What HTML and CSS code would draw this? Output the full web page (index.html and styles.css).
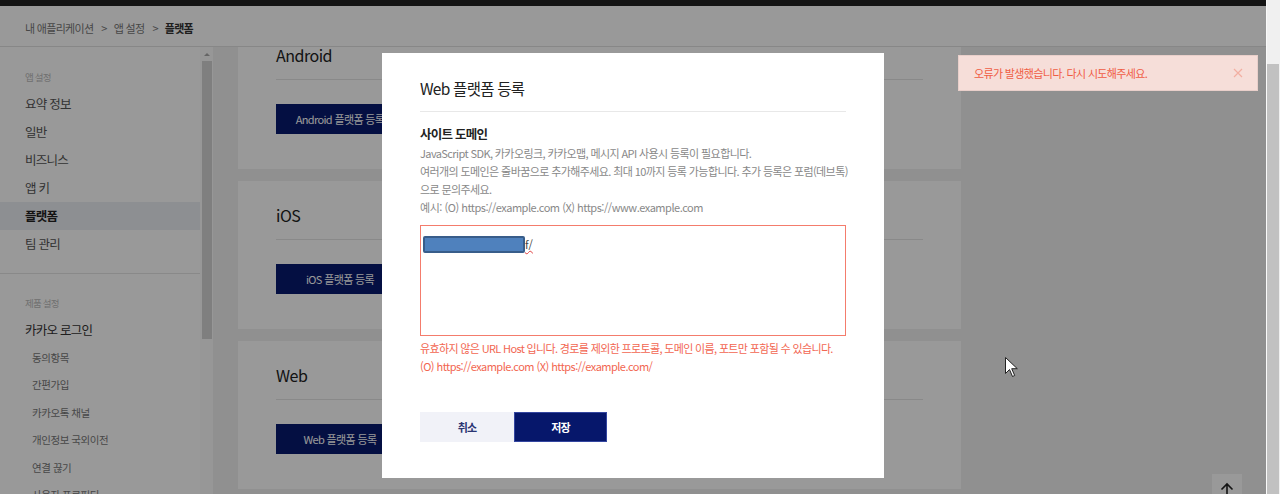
FILE: index.html
```html
<!DOCTYPE html>
<html lang="ko">
  <head>
    <meta charset="UTF-8" />
    <meta name="viewport" content="width=device-width, initial-scale=1.0" />
    <title>플랫폼 - 앱 설정</title>
    <link rel="stylesheet" href="styles.css">
  </head>
  <body>
    <div class="window">
      <div class="page">
        <div class="topbar"></div>
        <header class="crumbs">
          <span>내 애플리케이션</span><i>&gt;</i><span>앱 설정</span><i>&gt;</i><b>플랫폼</b>
        </header>
        <div class="layout">
          <aside class="sidebar">
            <p class="side-label">앱 설정</p>
            <ul class="side-menu">
              <li>요약 정보</li>
              <li>일반</li>
              <li>비즈니스</li>
              <li>앱 키</li>
              <li class="active">플랫폼</li>
              <li>팀 관리</li>
            </ul>
            <div class="side-divider"></div>
            <p class="side-label">제품 설정</p>
            <ul class="side-menu">
              <li class="group">카카오 로그인</li>
              <li class="sub">동의항목</li>
              <li class="sub">간편가입</li>
              <li class="sub">카카오톡 채널</li>
              <li class="sub">개인정보 국외이전</li>
              <li class="sub">연결 끊기</li>
              <li class="sub">사용자 프로퍼티</li>
            </ul>
          </aside>
          <div class="side-scroll">
            <span class="side-arrow"></span>
            <span class="side-thumb"></span>
          </div>
          <main class="content">
            <section class="card">
              <h2 class="card-title">Android</h2>
              <div class="card-line"></div>
              <button class="card-btn">Android 플랫폼 등록</button>
            </section>
            <section class="card">
              <h2 class="card-title">iOS</h2>
              <div class="card-line"></div>
              <button class="card-btn">iOS 플랫폼 등록</button>
            </section>
            <section class="card">
              <h2 class="card-title">Web</h2>
              <div class="card-line"></div>
              <button class="card-btn">Web 플랫폼 등록</button>
            </section>
          </main>
        </div>

        <button class="to-top">
          <svg width="14" height="16" viewBox="0 0 14 16"><path d="M7 2v14M1.5 7.5L7 2l5.5 5.5" fill="none" stroke="#222" stroke-width="1.6"/></svg>
        </button>

        <div class="dim"></div>

        <div class="toast">
          <span>오류가 발생했습니다. 다시 시도해주세요.</span>
          <svg width="10" height="10" viewBox="0 0 10 10"><path d="M1 1l8 8M9 1l-8 8" stroke="#f2afa2" stroke-width="1.2"/></svg>
        </div>

        <div class="modal">
          <h3 class="modal-title">Web 플랫폼 등록</h3>
          <div class="modal-line"></div>
          <p class="field-label">사이트 도메인</p>
          <p class="field-desc">
            JavaScript SDK, 카카오링크, 카카오맵, 메시지 API 사용시 등록이 필요합니다.<br>
            여러개의 도메인은 줄바꿈으로 추가해주세요. 최대 10까지 등록 가능합니다. 추가 등록은 포럼(데브톡)<br>
            으로 문의주세요.<br>
            <span class="latin">예시: (O) https://example.com (X) https://www.example.com</span>
          </p>
          <div class="field-input"><span class="redact"></span><span class="typo">f/</span></div>
          <p class="field-error">
            유효하지 않은 URL Host 입니다. 경로를 제외한 프로토콜, 도메인 이름, 포트만 포함될 수 있습니다.<br>
            <span class="latin">(O) https://example.com (X) https://example.com/</span>
          </p>
          <div class="modal-actions">
            <button class="btn btn-cancel">취소</button>
            <button class="btn btn-save">저장</button>
          </div>
        </div>

        <svg class="cursor" width="13" height="20" viewBox="0 0 13 20"><path d="M0.5 0.5v16l4-4 3 7 2.2-1-3-6.8h5.6z" fill="#fff" stroke="#222" stroke-width="1"/></svg>
      </div>
      <div class="scrollbar"><div class="scrollbar-thumb"></div></div>
    </div>
  </body>
</html>
```

FILE: styles.css
```css
* {
  margin: 0;
  padding: 0;
  box-sizing: border-box;
  font-family: "Noto Sans CJK KR", "Noto Sans", sans-serif;
}

body {
  width: 1280px;
  height: 494px;
  overflow: hidden;
  background: #f1f1f1;
}

ul {
  list-style: none;
}

button {
  font-family: inherit;
  cursor: pointer;
}

.window {
  display: flex;
  height: 494px;
}

.page {
  position: relative;
  flex: 1;
  height: 494px;
  overflow: hidden;
  display: flex;
  flex-direction: column;
  background: #f3f4f3;
}

.topbar {
  height: 6px;
  flex-shrink: 0;
  background: #222;
}

.crumbs {
  height: 41px;
  flex-shrink: 0;
  display: flex;
  align-items: center;
  padding: 3px 0 0 25px;
  background: #fff;
  border-bottom: 1px solid #e2e2e2;
  font-size: 11px;
  letter-spacing: -0.7px;
  color: #777;
}

.crumbs i {
  font-style: normal;
  margin: 0 7px 0 8px;
}

.crumbs b {
  color: #333;
  font-weight: 700;
}

.layout {
  flex: 1;
  min-height: 0;
  display: flex;
}

/* sidebar */
.sidebar {
  width: 200px;
  flex-shrink: 0;
  padding-top: 23px;
  background: #fff;
}

.side-label {
  padding-left: 25px;
  margin-bottom: 6px;
  font-size: 9.5px;
  line-height: 14px;
  letter-spacing: -0.8px;
  color: #bbb;
}

.side-menu li {
  height: 28px;
  line-height: 28px;
  padding-left: 25px;
  font-size: 12.5px;
  letter-spacing: -0.75px;
  color: #555;
}

.side-menu li.active {
  background: #eceef3;
  color: #222;
  font-weight: 700;
}

.side-menu li.group {
  color: #333;
}

.side-menu li.sub {
  height: 27.4px;
  line-height: 27.4px;
  padding-left: 32px;
  font-size: 10.5px;
  letter-spacing: -0.45px;
  color: #777;
}

.side-divider {
  height: 1px;
  margin: 15px 0 22px;
  background: #e5e5e5;
}

.side-scroll {
  width: 13px;
  flex-shrink: 0;
  display: flex;
  flex-direction: column;
  align-items: center;
  background: #fcfcfc;
}

.side-arrow {
  width: 0;
  height: 0;
  margin: 6px 0 5px;
  border-left: 3px solid transparent;
  border-right: 3px solid transparent;
  border-bottom: 3px solid #a8a8a8;
}

.side-thumb {
  width: 10px;
  height: 278px;
  background: #d4d4d4;
}

/* content */
.content {
  flex: 1;
  overflow: hidden;
  display: flex;
  flex-direction: column;
  gap: 12px;
  padding-left: 25px;
  background: #f0f1f0;
}

.card {
  width: 723px;
  flex-shrink: 0;
  padding: 22px 38px 35px;
  background: #fff;
}

.card:first-child {
  margin-top: -26px;
}

.card-title {
  font-size: 16px;
  font-weight: 400;
  line-height: 24px;
  letter-spacing: -0.5px;
  color: #222;
}

.card-line {
  height: 1px;
  margin-top: 12px;
  background: #e4e4e4;
}

.card-btn {
  display: block;
  width: 128px;
  height: 30px;
  margin-top: 24px;
  border: none;
  background: #071a6e;
  color: #fff;
  font-size: 11px;
  letter-spacing: -0.65px;
}

.to-top {
  position: absolute;
  left: 1212px;
  top: 474px;
  width: 30px;
  height: 30px;
  border: none;
  padding-top: 6px;
  background: #fff;
}

.dim {
  position: absolute;
  inset: 0;
  background: rgba(0, 0, 0, 0.4);
}

/* toast */
.toast {
  position: absolute;
  left: 958px;
  top: 55px;
  width: 300px;
  height: 36px;
  display: flex;
  align-items: center;
  justify-content: space-between;
  padding: 0 14px 0 15px;
  background: #f6ded9;
  border: 1px solid #e9cfca;
  font-size: 11px;
  letter-spacing: -0.65px;
  color: #f05c44;
}

/* modal */
.modal {
  position: absolute;
  left: 382px;
  top: 53px;
  width: 502px;
  padding: 23px 38px 36px;
  background: #fff;
}

.modal-title {
  font-size: 15.5px;
  font-weight: 400;
  line-height: 24px;
  letter-spacing: -0.75px;
  color: #222;
}

.modal-line {
  height: 1px;
  margin-top: 11px;
  background: #e8e8e8;
}

.field-label {
  margin-top: 12px;
  font-size: 12.5px;
  font-weight: 700;
  line-height: 20px;
  letter-spacing: -0.75px;
  color: #222;
}

.field-desc {
  font-size: 11px;
  line-height: 18px;
  letter-spacing: -0.6px;
  color: #888;
  white-space: nowrap;
}

.field-desc .latin {
  letter-spacing: -0.48px;
}

.field-input {
  height: 111px;
  margin-top: 9px;
  padding: 10px 2px 0;
  border: 1px solid #f47c6c;
  font-size: 11px;
  line-height: 17px;
  color: #444;
}

.redact {
  display: inline-block;
  vertical-align: top;
  width: 102px;
  height: 17px;
  background: #4f81bd;
  border: 2px solid #385d8a;
  border-radius: 2px;
}

.typo {
  text-decoration: underline wavy #e04040;
  text-decoration-thickness: 1px;
}

.field-error {
  margin-top: 3px;
  font-size: 11px;
  line-height: 18px;
  letter-spacing: -0.65px;
  color: #f26651;
  white-space: nowrap;
}

.field-error .latin {
  letter-spacing: -0.53px;
}

.modal-actions {
  display: flex;
  margin-top: 37px;
}

.btn {
  width: 94px;
  height: 30px;
  border: none;
  font-size: 11px;
  font-weight: 700;
  letter-spacing: -0.8px;
}

.btn-cancel {
  background: #f1f2f8;
  color: #2b3673;
}

.btn-save {
  width: 93px;
  background: #06176b;
  border: 1px solid #3446a0;
  color: #fff;
}

.cursor {
  position: absolute;
  left: 1005px;
  top: 357px;
}

/* page scrollbar */
.scrollbar {
  width: 14px;
  flex-shrink: 0;
  padding: 64px 1px 0 0;
  background: #f0f0f0;
  border-left: 1px solid #fafafa;
}

.scrollbar-thumb {
  height: 100%;
  background: #c1c1c1;
}
```
